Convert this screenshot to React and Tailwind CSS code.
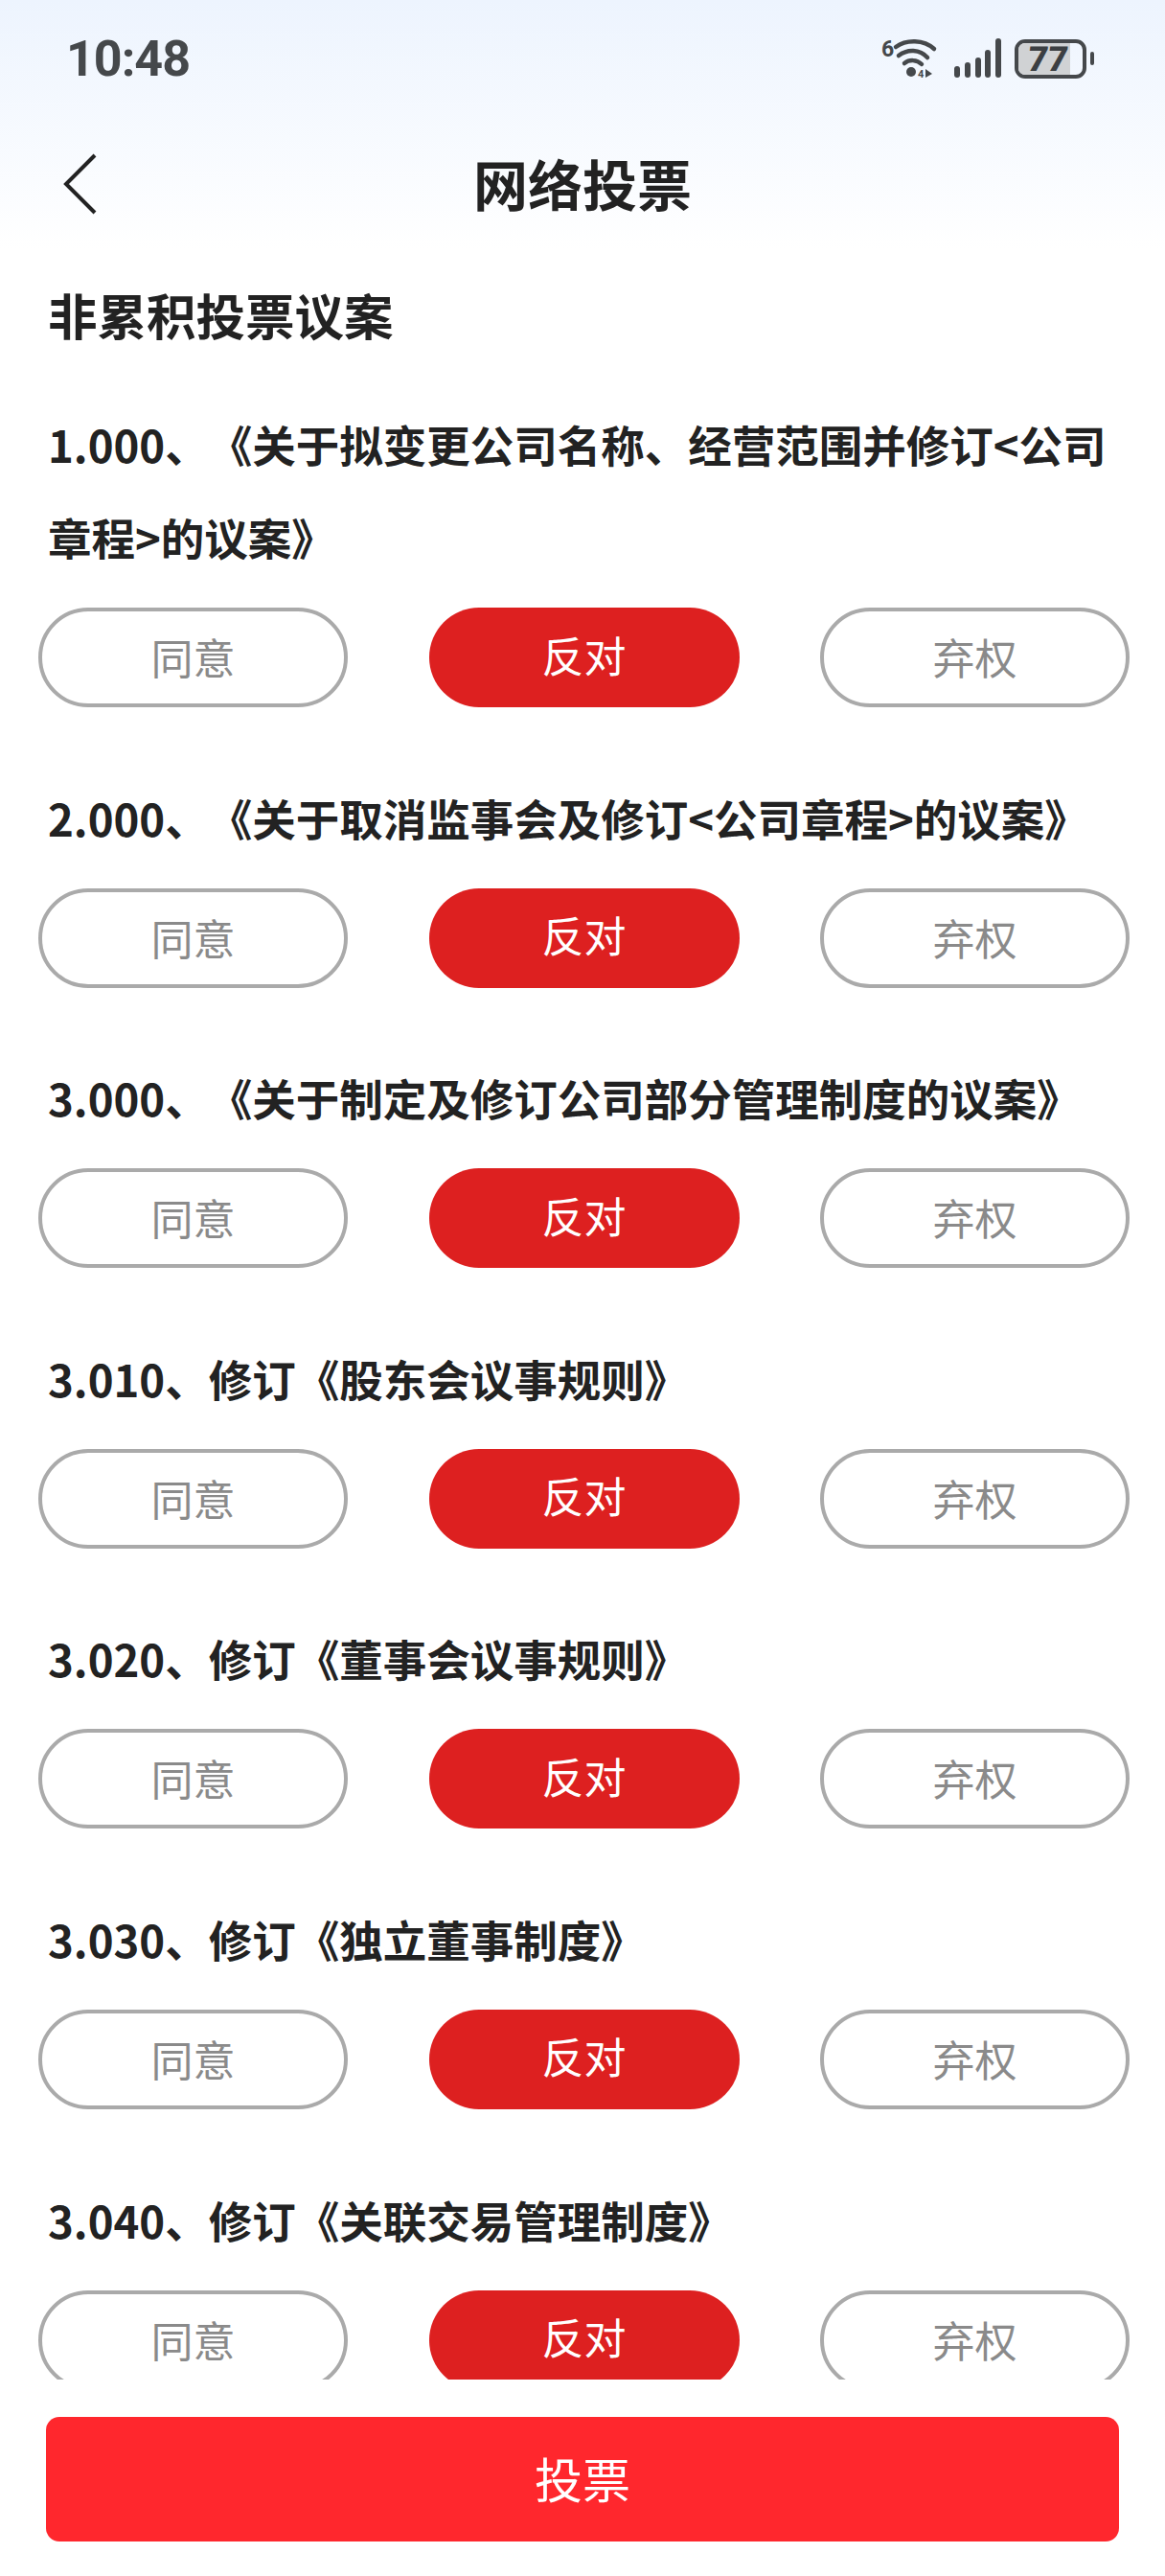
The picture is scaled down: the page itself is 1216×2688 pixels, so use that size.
const font = { fontFamily: '"Noto Sans CJK SC", "Noto Sans", sans-serif' };

const items = [
  '1.000、《关于拟变更公司名称、经营范围并修订<公司章程>的议案》',
  '2.000、《关于取消监事会及修订<公司章程>的议案》',
  '3.000、《关于制定及修订公司部分管理制度的议案》',
  '3.010、修订《股东会议事规则》',
  '3.020、修订《董事会议事规则》',
  '3.030、修订《独立董事制度》',
  '3.040、修订《关联交易管理制度》',
];

function StatusIcons() {
  return (
    <div className="flex items-center mr-[74px]">
      <svg width="128" height="46" viewBox="0 0 128 46" fill="none" className="text-[#45484b]">
        <text x="1" y="21" fontSize="23" fontWeight="700" fill="currentColor" fontFamily="Roboto, sans-serif">6</text>
        <g stroke="currentColor" strokeWidth="4.5" strokeLinecap="round" transform="translate(2 2)">
          <path d="M14 9C25 1 43 1 54 11" />
          <path d="M17 18C26 11 39 11 47 20" />
          <path d="M23 26C28 22 36 22 41 27" />
        </g>
        <circle cx="32" cy="37" r="5" fill="currentColor" />
        <text x="39" y="43" fontSize="11" fontWeight="700" fill="currentColor" fontFamily="Roboto, sans-serif">4</text>
        <path d="M47 34L54 39L47 43Z" fill="currentColor" />
        <g stroke="currentColor" strokeWidth="6" strokeLinecap="round" transform="translate(2 2)">
          <path d="M78 32V38" />
          <path d="M89 28V38" />
          <path d="M100 23V38" />
          <path d="M110 15V38" />
          <path d="M121 3V38" />
        </g>
      </svg>
      <div className="relative ml-[12px] w-[75px] h-[41px] rounded-[11px] border-[4px] border-[#45484b] overflow-hidden">
        <div className="w-[54px] h-full bg-[#d0d2d4]" />
        <span className="absolute inset-0 pl-[10px] flex items-center font-black text-[36px] text-[#3c3f42] -skew-x-6" style={{ fontFamily: 'Roboto, sans-serif' }}>77</span>
      </div>
      <div className="ml-[4px] w-[4px] h-[14px] rounded-full bg-[#45484b]" />
    </div>
  );
}

function VoteRow() {
  return (
    <div className="flex justify-between pr-[37px] text-[44px]">
      <button className="w-[323px] h-[104px] rounded-full border-[4px] border-[#aaaaaa] bg-white text-[#8a8a8a] flex items-center justify-center pb-[2px]">同意</button>
      <button className="w-[324px] h-[104px] rounded-full bg-[#dd2020] text-white flex items-center justify-center pb-[7px]">反对</button>
      <button className="w-[323px] h-[104px] rounded-full border-[4px] border-[#aaaaaa] bg-white text-[#8a8a8a] flex items-center justify-center pb-[2px]">弃权</button>
    </div>
  );
}

export default function App() {
  return (
    <div className="w-[1216px] h-[2688px] flex flex-col overflow-hidden bg-gradient-to-b from-[#edf4fe] to-white to-[260px] [text-spacing-trim:space-all]" style={font}>
      <div className="h-[126px] shrink-0 flex items-start justify-between pt-[38px]">
        <span className="pl-[69px] text-[52px] leading-[48px] font-bold text-[#45484b] tracking-[-1px]" style={{ fontFamily: 'Roboto, sans-serif' }}>10:48</span>
        <StatusIcons />
      </div>

      <div className="relative h-[136px] shrink-0 flex items-center justify-center">
        <svg width="36" height="64" viewBox="0 0 36 64" fill="none" className="absolute left-[66px] top-[34px]">
          <path d="M33 2L3 32L33 62" stroke="#222222" strokeWidth="4" />
        </svg>
        <h1 className="text-[57px] font-bold text-[#222222] pb-[6px]">网络投票</h1>
      </div>

      <div className="flex-1 min-h-0 overflow-hidden pl-[40px]">
        <h2 className="mt-[11px] mb-[35px] pl-[10px] h-[110px] flex items-center text-[51.5px] font-bold text-[#222222]">非累积投票议案</h2>
        {items.map((title) => (
          <div key={title} className="mb-[69.6px]">
            <p className="pl-[10px] w-[1136px] mb-[22px] -mt-[3px] pb-[3px] text-[45.5px] leading-[97px] font-bold text-[#222222]">{title}</p>
            <VoteRow />
          </div>
        ))}
      </div>

      <div className="shrink-0 pt-[39px] pb-[36px] px-[48px]">
        <button className="w-full h-[130px] rounded-[14px] bg-[#ff272d] text-white text-[50px] flex items-center justify-center pb-[4px]">投票</button>
      </div>
    </div>
  );
}
